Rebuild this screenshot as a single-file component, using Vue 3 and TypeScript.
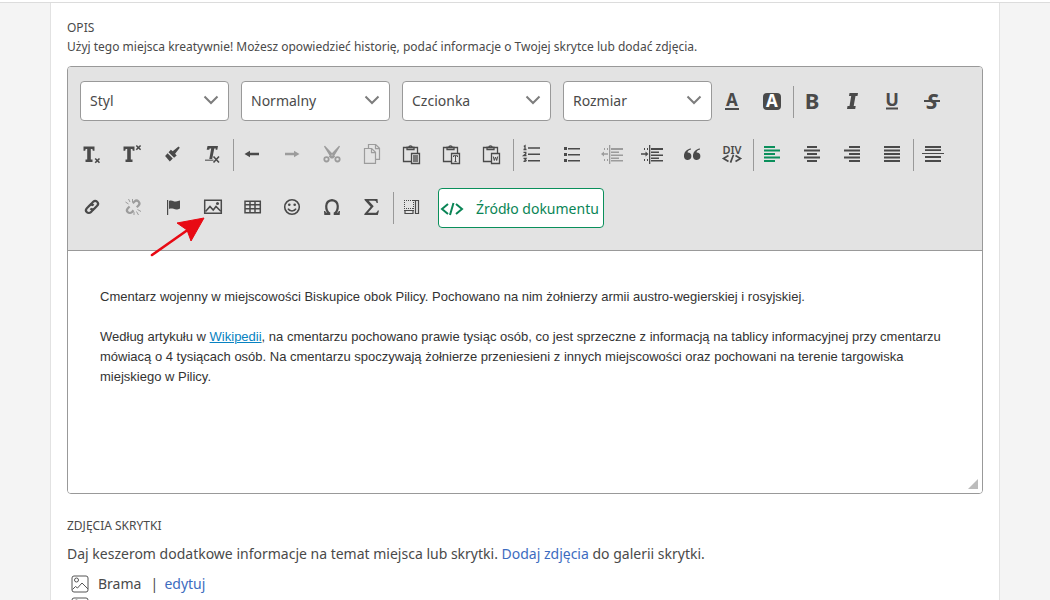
<script setup lang="ts">
import { ref } from 'vue'

interface Combo {
  id: string
  label: string
}
interface Tool {
  icon: string
  title: string
  state?: 'active' | 'off'
}
interface Group {
  name: string
  divided: boolean
  tools: Tool[]
}

const combos: Combo[] = [
  { id: 'style', label: 'Styl' },
  { id: 'format', label: 'Normalny' },
  { id: 'font', label: 'Czcionka' },
  { id: 'size', label: 'Rozmiar' },
]

const groups: Group[] = [
  {
    name: 'Kolory',
    divided: false,
    tools: [
      { icon: 'color', title: 'Kolor tekstu' },
      { icon: 'bgcolor', title: 'Kolor tła' },
    ],
  },
  {
    name: 'Wyróżnienia',
    divided: true,
    tools: [
      { icon: 'bold', title: 'Pogrubienie' },
      { icon: 'italic', title: 'Kursywa' },
      { icon: 'underline', title: 'Podkreślenie' },
      { icon: 'strike', title: 'Przekreślenie' },
    ],
  },
  {
    name: 'Indeksy',
    divided: false,
    tools: [
      { icon: 'sub', title: 'Indeks dolny' },
      { icon: 'sup', title: 'Indeks górny' },
      { icon: 'brush', title: 'Kopiuj formatowanie' },
      { icon: 'clear', title: 'Usuń formatowanie' },
    ],
  },
  {
    name: 'Schowek',
    divided: true,
    tools: [
      { icon: 'undo', title: 'Cofnij' },
      { icon: 'redo', title: 'Ponów', state: 'off' },
      { icon: 'cut', title: 'Wytnij', state: 'off' },
      { icon: 'copy', title: 'Kopiuj', state: 'off' },
      { icon: 'paste', title: 'Wklej' },
      { icon: 'pasteText', title: 'Wklej jako tekst' },
      { icon: 'pasteWord', title: 'Wklej z Worda' },
    ],
  },
  {
    name: 'Listy',
    divided: true,
    tools: [
      { icon: 'ol', title: 'Lista numerowana' },
      { icon: 'ul', title: 'Lista wypunktowana' },
      { icon: 'outdent', title: 'Zmniejsz wcięcie', state: 'off' },
      { icon: 'indent', title: 'Zwiększ wcięcie' },
      { icon: 'quote', title: 'Cytat' },
      { icon: 'div', title: 'Utwórz pojemnik DIV' },
    ],
  },
  {
    name: 'Wyrównanie',
    divided: true,
    tools: [
      { icon: 'left', title: 'Wyrównaj do lewej', state: 'active' },
      { icon: 'center', title: 'Wyśrodkuj' },
      { icon: 'right', title: 'Wyrównaj do prawej' },
      { icon: 'justify', title: 'Wyjustuj' },
    ],
  },
  {
    name: 'Linia',
    divided: true,
    tools: [{ icon: 'hr', title: 'Wstaw poziomą linię' }],
  },
  {
    name: 'Wstawianie',
    divided: false,
    tools: [
      { icon: 'link', title: 'Wstaw odnośnik' },
      { icon: 'unlink', title: 'Usuń odnośnik', state: 'off' },
      { icon: 'flag', title: 'Kotwica' },
      { icon: 'image', title: 'Obrazek' },
      { icon: 'table', title: 'Tabela' },
      { icon: 'smile', title: 'Emotikony' },
      { icon: 'omega', title: 'Znak specjalny' },
      { icon: 'sigma', title: 'Wzór' },
    ],
  },
  {
    name: 'Narzędzia',
    divided: true,
    tools: [{ icon: 'blocks', title: 'Pokaż bloki' }],
  },
]

const icons: Record<string, string> = {
  color: '<text x="12" y="17" font-size="17" font-weight="700">A</text><path d="M5 19h14v2H5z"/>',
  bgcolor:
    '<rect x="3" y="4" width="18" height="17" rx="4"/><text x="12" y="18" font-size="17" font-weight="700" fill="#fff">A</text>',
  bold: '<text x="12" y="20" font-size="22" font-weight="700">B</text>',
  italic:
    '<path d="M9.500 4h8.500l-.5 3H15.500l-1.800 10h2l-.5 3H7l.5-3h2l1.700-10H9z"/>',
  underline:
    '<text x="12" y="17" font-size="18" font-weight="700">U</text><path d="M6 18.500h12v2H6z"/>',
  strike:
    '<text x="12" y="20" font-size="22" font-weight="700" font-style="italic">S</text><path d="M4 11h16v2H4z"/>',
  sub: '<path d="M3.500 4.500h11v4.300h-1.700l-.5-1.700h-1.500v10.300h1.700V20H5.500v-2.600h1.700V7.100H5.700l-.5 1.700H3.500z"/><path class="l" stroke-width="1.600" d="M15.200 16.500l4.300 4.300m0-4.300l-4.300 4.300"/>',
  sup: '<path d="M3.500 4.500h11v4.300h-1.700l-.5-1.700h-1.500v10.300h1.700V20H5.500v-2.600h1.700V7.100H5.700l-.5 1.700H3.500z"/><path class="l" stroke-width="1.600" d="M16.300 3.500l4.300 4.300m0-4.300l-4.300 4.300"/>',
  brush:
    '<path d="M18.500 4.500l1.300 1.200-4.700 6 1.600 1.800-2.600 2.300-5.600-5.600 2.400-2.400 1.800 1.500zM7.600 11.200l5.200 5.300-3 3-4.700-5.500z"/>',
  clear:
    '<path d="M7.500 4H18l-.7 3.800h-1.700l.2-1.300h-1.500L12.200 17H9.300l1.900-10.500H9.700l-.5 1.300H6.700z"/><path d="M5 17.500h8.500V19H5z" opacity=".7"/><path class="l" stroke-width="1.600" d="M13.500 14.500l5.500 6m0-6l-5.500 6"/>',
  undo: '<path d="M4.500 12l5.500-3.200v2h9v2.400h-9v2z"/>',
  redo: '<path d="M19.500 12L14 8.800v2H5v2.400h9v2z"/>',
  cut: '<path d="M4.500 4.200L14.300 14.500l-1.500 1.300-2.300-2zM19.500 4.200L9.700 14.500l1.500 1.300 2.300-2z" stroke="currentColor" stroke-width="1.300"/><circle class="l" stroke-width="1.800" cx="6.500" cy="17.300" r="2.200"/><circle class="l" stroke-width="1.800" cx="17.500" cy="17.300" r="2.200"/>',
  copy: '<path class="l" stroke-width="1.200" d="M8.500 6V2.500h7.200l3.800 3.800v11h-3.500M15.500 2.700v4h4M4.500 6.500h7.200l3.800 3.800v11h-11zM11.500 6.700v4h4"/>',
  paste:
    '<path class="l" stroke-width="1.300" d="M11 19.500H3.500v-14h14V11M7 7.500V5.200h1.600a2 2 0 0 1 3.800 0H14v2.300z"/><path class="l" stroke-width="1.300" d="M11.500 11.500h8v10h-8z"/><path d="M13 13h5v7h-5z" opacity=".7"/>',
  pasteText:
    '<path class="l" stroke-width="1.300" d="M11 19.500H3.500v-14h14V11M7 7.500V5.200h1.600a2 2 0 0 1 3.800 0H14v2.300z"/><path class="l" stroke-width="1.300" d="M11.500 11.500h8v10h-8z"/><path class="l" d="M13.500 15v-1.300h4V15M15.500 14v5.500M14.500 19.500h2"/>',
  pasteWord:
    '<path class="l" stroke-width="1.300" d="M11 19.500H3.500v-14h14V11M7 7.500V5.200h1.600a2 2 0 0 1 3.800 0H14v2.300z"/><path class="l" stroke-width="1.300" d="M11.500 11.500h8v10h-8z"/><path class="l" d="M13.300 14.500l1 4 1.200-3.500 1.200 3.500 1-4"/>',
  ol: '<path d="M8 5.300h12v1.500H8zM8 11.500h12V13H8zM8 18h12v1.500H8z"/><path class="l" stroke-width="1.300" d="M3.800 4.500L5 3.700V7.500M3.500 7.500h3M3.500 10.300h2.300v1.500L3.700 13.500h2.800M3.500 16.300h2.500L5 17.800c2 0 1.500 2-1.500 1.600"/>',
  ul: '<path d="M4 5h3v3H4zM4 11h3v3H4zM4 17h3v3H4zM8 6h12v1.500H8zM8 12h12v1.500H8zM8 18h12v1.500H8z"/>',
  outdent:
    '<path d="M9 3h1.300v19H9zM11 6h12v2H11zM11 9.500h8V11h-8zM11 12.500h12V14H11zM11 15.500h8V17h-8zM11 18h12v1.500H11zM1 12l3-2.500v1.800h4v1.400H4v1.800zM4 6h1v2H4zM7 6h1v2H7zM4 17h1v2H4zM7 17h1v2H7z"/>',
  indent:
    '<path d="M9 3h1.300v19H9zM11 6h12v2H11zM11 9.500h8V11h-8zM11 12.500h12V14H11zM11 15.500h8V17h-8zM11 18h12v1.500H11zM8.500 12l-3-2.500v1.800H1v1.400h4.500v1.800zM4 6h1v2H4zM7 6h1v2H7zM4 17h1v2H4zM7 17h1v2H7z"/>',
  quote:
    '<path d="M11 7.500C8.500 8 7.500 9.200 7.600 10.500a3.700 3.700 0 1 1-3.600 4C3.600 10.500 6.500 7 11 6.500zM20 7.500c-2.500.5-3.500 1.700-3.400 3a3.700 3.700 0 1 1-3.600 4C12.600 10.500 15.500 7 20 6.500z"/>',
  div: '<text x="12" y="11.500" font-size="11" font-weight="600">DIV</text><path class="l" stroke-width="1.700" d="M8.500 13.500l-5 3 5 3M15.500 13.500l5 3-5 3M13.500 12.800l-3 7.800"/>',
  left: '<path d="M4 4h11v2H4zM4 7.500h16v2H4zM4 11h11v2H4zM4 14.500h16v2H4zM4 18h11v2H4z"/>',
  center: '<path d="M7 4h10v2H7zM4 7.500h16v2H4zM7 11h10v2H7zM4 14.500h16v2H4zM7 18h10v2H7z"/>',
  right: '<path d="M9 4h11v2H9zM4 7.500h16v2H4zM9 11h11v2H9zM4 14.500h16v2H4zM9 18h11v2H9z"/>',
  justify: '<path d="M4 4h16v2H4zM4 7.500h16v2H4zM4 11h16v2H4zM4 14.500h16v2H4zM4 18h16v2H4z"/>',
  hr: '<path d="M5 4h16v2H5zM5 7.300h16v1.700H5zM2 11h22v1H2zM5 14h16v2H5zM5 18h16v2H5z"/>',
  link: '<g class="l" stroke-width="2.200" transform="rotate(-45 12 12)"><path d="M11.500 14.800H7.500a2.800 2.800 0 0 1 0-5.600h4a2.800 2.800 0 0 1 2.700 2.800"/><path d="M12.500 9.200h4a2.800 2.800 0 0 1 0 5.600h-4A2.800 2.800 0 0 1 9.800 12"/></g>',
  unlink:
    '<g class="l" stroke-width="2.200" transform="rotate(-45 13 12)"><path d="M11 14.800H8.500a2.800 2.800 0 0 1 0-5.600H11"/><path d="M15.500 9.200H18a2.800 2.800 0 0 1 0 5.600h-2.500"/></g><path class="l" d="M5.500 7l3 2M8.500 4l1.500 3M12.500 4v3M14 17v3M16.500 16.500l2 3.500M17.500 14.500l3.500 2"/>',
  flag: '<path d="M7 5h1.200v15H7zM9 6c3-1.500 4.500 1 7 .5 1.500-.3 2.500-.5 4-1v8c-3 1.500-4.500 1-6.500.3-1.500-.4-3-.4-4.500.2z"/>',
  image:
    '<path class="l" stroke-width="1.500" d="M4.700 5.200h16.600v13H4.700z"/><path class="l" stroke-width="1.600" d="M5.500 16.500l4.500-5 3.200 3.500 2.800-3.500 4.800 4.700"/><circle cx="17.500" cy="8.500" r="1.500"/>',
  table:
    '<path class="l" stroke-width="1.500" d="M5 6.200h15.300v11.600H5zM5 9.700h15.500M5 13.700h15.500M10 6v12M15 6v12"/>',
  smile:
    '<circle class="l" stroke-width="1.600" cx="12" cy="12" r="7.300"/><circle cx="9.300" cy="9.800" r="1.300"/><circle cx="14.700" cy="9.800" r="1.300"/><path class="l" stroke-width="1.600" d="M8 13.700c1.500 3 6.500 3 8 0"/>',
  omega:
    '<path class="l" stroke-width="2.200" d="M9.500 18.800C5.500 15.500 4 6 12 5.200c8 .8 6.500 10.300 2.500 13.600"/><path d="M4 16h1.300c.2 1 .6 1.600 1.600 1.600h3.400V20H4.300zM20 16h-1.300c-.2 1-.6 1.600-1.600 1.600h-3.400V20h6z"/>',
  sigma:
    '<path d="M4.500 4h13l.4 4h-1.300c-.3-1.500-.7-2.200-2.200-2.200H8.700l5 5.500-5.700 6.500h6.800c1.700 0 2.300-.7 3-2.300h1.200L17.800 20H4.300v-1l6.300-7.200L4.500 5z"/>',
  blocks:
    '<path class="l" stroke-dasharray="1 1" d="M4 5.500h12M4.500 5v11M13.500 5v11M4 13.500h10"/><path class="l" stroke-width="1.200" d="M15.500 5.500h3v13h-3zM5 15.500h8v3H5z"/>',
}

const selected = ref('')
</script>

<template>
  <div class="page">
    <div class="topline"></div>
    <main class="panel">
      <h2 class="heading">OPIS</h2>
      <p class="hint">
        Użyj tego miejsca kreatywnie! Możesz opowiedzieć historię, podać informacje o Twojej skrytce lub dodać zdjęcia.
      </p>

      <section class="editor" aria-label="Edytor opisu">
        <div class="toolbar" role="toolbar" aria-label="Formatowanie">
          <div class="combos">
            <div v-for="c in combos" :key="c.id" class="combo">
              <select :id="c.id" v-model="selected" :aria-label="c.label">
                <option value="">{{ c.label }}</option>
              </select>
              <svg class="chevron" viewBox="0 0 16 10" aria-hidden="true">
                <path d="M1.500 1.500L8 8l6.500-6.500" />
              </svg>
            </div>
          </div>
          <div
            v-for="g in groups"
            :key="g.name"
            class="group"
            :class="{ divided: g.divided }"
            role="group"
            :aria-label="g.name"
          >
            <button
              v-for="t in g.tools"
              :key="t.icon"
              type="button"
              class="tool"
              :class="t.state"
              :disabled="t.state === 'off'"
              :aria-label="t.title"
            >
              <svg class="icon" viewBox="0 0 24 24" aria-hidden="true" v-html="icons[t.icon]"></svg>
            </button>
          </div>
          <button type="button" class="source">
            <svg class="code" viewBox="0 0 24 16" aria-hidden="true">
              <path d="M8 3L2 8l6 5M16 3l6 5-6 5M13.500 2l-3.500 12" />
            </svg>
            Źródło dokumentu
          </button>
        </div>

        <svg class="pointer" viewBox="0 0 56 42" aria-hidden="true">
          <path d="M3 38L40 12" fill="none" stroke="#e80a14" stroke-width="2.600" stroke-linecap="round" />
          <path d="M55 1L28 6l10 7 4 11z" fill="#e80a14" stroke="#e80a14" stroke-linejoin="round" />
        </svg>

        <div class="content">
          <p>
            Cmentarz wojenny w miejscowości Biskupice obok Pilicy. Pochowano na nim żołnierzy armii austro-wegierskiej i
            rosyjskiej.
          </p>
          <p>
            Według artykułu w <a href="#wikipedia">Wikipedii</a>, na cmentarzu pochowano prawie tysiąc osób, co jest
            sprzeczne z informacją na tablicy informacyjnej przy cmentarzu mówiacą o 4 tysiącach osób. Na cmentarzu
            spoczywają żołnierze przeniesieni z innych miejscowości oraz pochowani na terenie targowiska miejskiego w
            Pilicy.
          </p>
        </div>
        <span class="resizer"></span>
      </section>

      <h2 class="heading">ZDJĘCIA SKRYTKI</h2>
      <p class="gallery-text">
        Daj keszerom dodatkowe informacje na temat miejsca lub skrytki. <a href="#dodaj">Dodaj zdjęcia</a> do galerii
        skrytki.
      </p>
      <ul class="photos">
        <li v-for="n in 2" :key="n">
          <svg class="photo" viewBox="0 0 18 18" aria-hidden="true">
            <rect x="1" y="1" width="16" height="16" rx="2" />
            <circle cx="5.500" cy="5" r="2" />
            <path d="M1.500 14.500l3-3 2 1.500 4.500-5 6 6" />
          </svg>
          <template v-if="n === 1">
            <span>Brama</span>
            <span class="bar">|</span>
            <a href="#edytuj">edytuj</a>
          </template>
        </li>
      </ul>
    </main>
  </div>
</template>

<style>
body {
  background: #f4f4f4;
}
html {
  overflow: hidden;
}
</style>

<style scoped>
.page {
  height: 100vh;
  overflow: hidden;
  display: flex;
  flex-direction: column;
  color: #4a4a4a;
  font: 14px/20px 'Noto Sans', sans-serif;
}
.topline {
  flex: none;
  height: 2px;
  background: #fff;
  border-bottom: 1px solid #dcdcdc;
}
.panel {
  flex: 1;
  margin: 0 50px;
  padding: 16px 16px 0;
  background: #fff;
  border: solid #e2e2e2;
  border-width: 0 1px;
}
.heading {
  margin: 0;
  font-size: 12px;
  line-height: 18px;
  font-weight: 400;
}
.hint {
  margin: 0 0 10px;
  font-size: 12px;
  line-height: 19px;
}
.editor {
  position: relative;
  margin-bottom: 23px;
  border: 1px solid #999;
  border-radius: 4px;
  overflow: hidden;
}
.toolbar {
  display: flex;
  flex-wrap: wrap;
  row-gap: 13px;
  padding: 14px 4px 22px;
  background: #e3e3e3;
  border-bottom: 1px solid #999;
}
.combos {
  display: flex;
  gap: 12px;
  margin-left: 8px;
}
.combo {
  position: relative;
  width: 149px;
}
.combo select {
  appearance: none;
  box-sizing: border-box;
  width: 100%;
  height: 40px;
  padding: 0 32px 0 9px;
  border: 1px solid #999;
  border-radius: 4px;
  background: #fff;
  color: #4a4a4a;
  font: inherit;
}
.chevron {
  position: absolute;
  right: 10px;
  top: 14px;
  width: 16px;
  height: 10px;
  fill: none;
  stroke: #7d7d7d;
  stroke-width: 2;
  pointer-events: none;
}
.group {
  display: flex;
}
.divided::before {
  content: '';
  width: 1px;
  height: 32px;
  margin: 5px -2px 0 1px;
  background: #999;
}
.tool {
  display: flex;
  align-items: center;
  justify-content: center;
  width: 40px;
  height: 40px;
  padding: 0;
  border: 0;
  background: none;
  color: #4a4a4a;
}
.tool.off {
  color: #9c9c9c;
}
.tool.active {
  color: #0a8f5b;
}
.icon {
  width: 24px;
  height: 24px;
  overflow: visible;
  fill: currentColor;
  font-family: 'Noto Sans', sans-serif;
  text-anchor: middle;
}
.icon :deep(.l) {
  fill: none;
  stroke: currentColor;
}
.source {
  display: flex;
  align-items: center;
  gap: 12px;
  height: 40px;
  margin: 1px 0 0 6px;
  padding: 1px 4px 0 1px;
  border: 1px solid #0a8f5b;
  border-radius: 4px;
  background: #fff;
  color: #0a8556;
  font: inherit;
}
.code {
  width: 24px;
  height: 16px;
  fill: none;
  stroke: currentColor;
  stroke-width: 2;
}
.pointer {
  position: absolute;
  left: 81px;
  top: 150px;
  width: 56px;
  height: 42px;
  pointer-events: none;
}
.content {
  min-height: 171px;
  padding: 36px 32px 35px;
  background: #fff;
  color: #333;
  font: 13px/20px 'Liberation Sans', Arial, sans-serif;
}
.content p {
  margin: 0 0 20px;
}
.content p:last-child {
  margin: 0;
}
.content a {
  color: #0782c1;
}
.resizer {
  position: absolute;
  right: 4px;
  bottom: 4px;
  border-left: 10px solid transparent;
  border-bottom: 10px solid #bcbcbc;
}
.gallery-text {
  margin: 9px 0;
}
.gallery-text a,
.photos a {
  color: #3d6cc0;
  text-decoration: none;
}
.photos {
  margin: 0;
  padding: 0 0 0 4px;
  list-style: none;
}
.photos li {
  display: flex;
  align-items: center;
  gap: 9px;
  height: 22px;
}
.bar {
  width: 5px;
  text-align: center;
}
.photo {
  width: 18px;
  height: 18px;
  fill: none;
  stroke: #555;
}
</style>
